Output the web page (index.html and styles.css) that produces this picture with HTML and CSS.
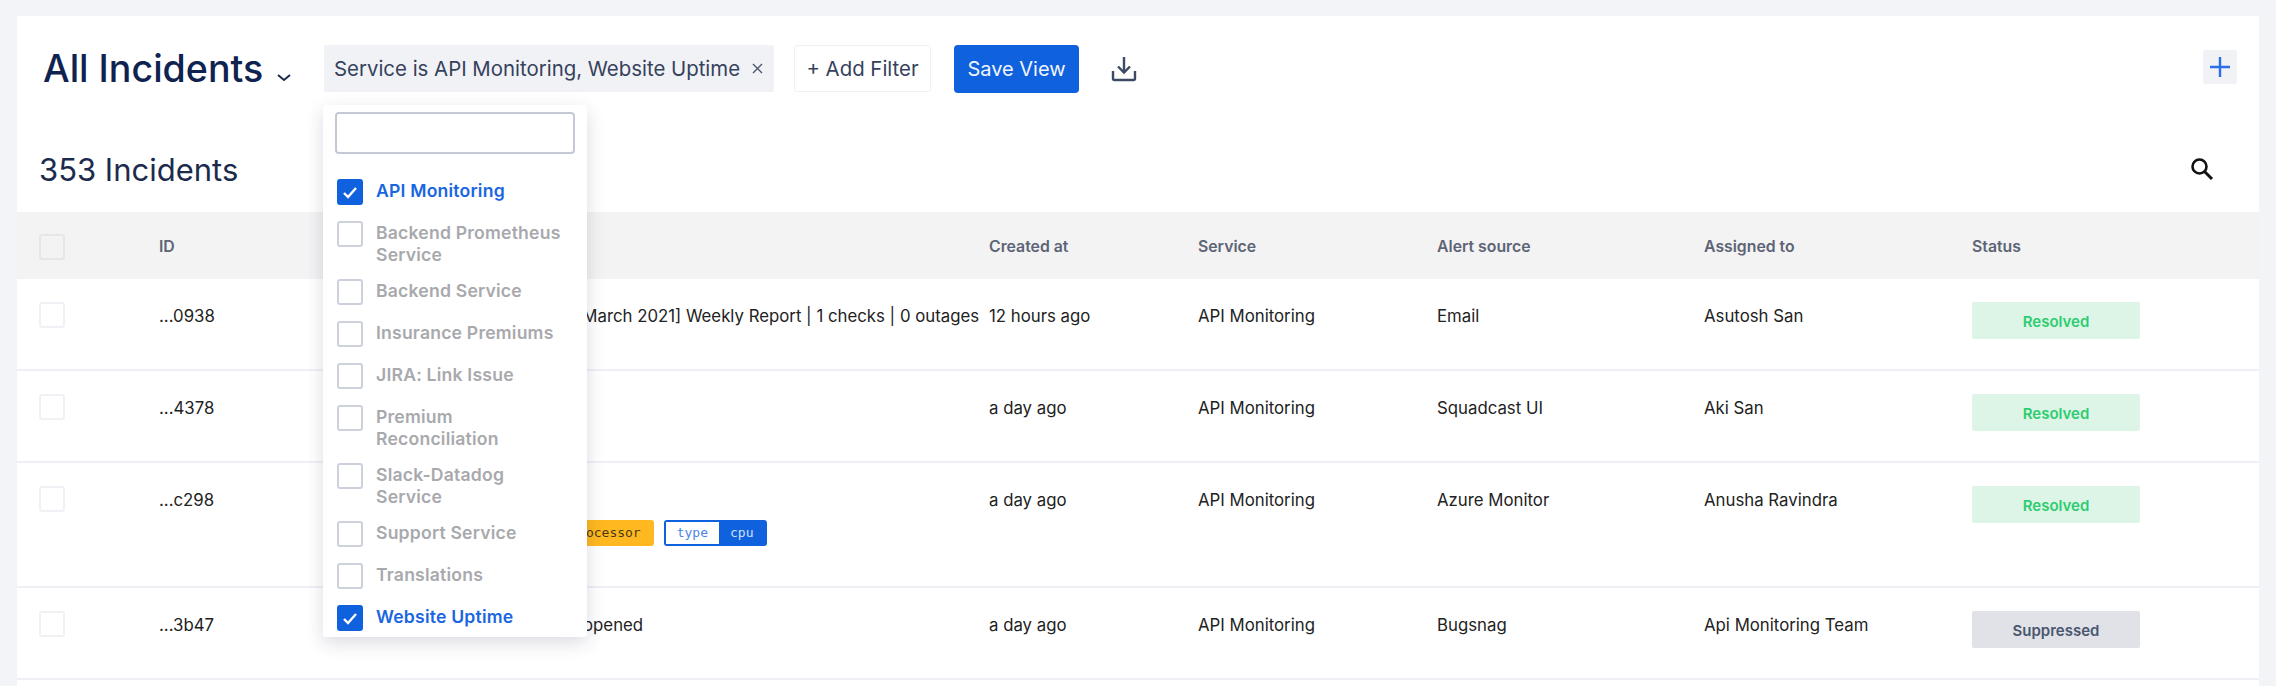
FILE: index.html
```html
<!DOCTYPE html>
<html>
<head>
<meta charset="utf-8"/>
<title>All Incidents</title>
<link rel="stylesheet" href="styles.css">
</head>
<body>
<div class="card">

<div class="toolbar">
  <h1 class="title">All Incidents</h1>
  <svg class="chevron" width="16" height="9" viewBox="0 0 16 9"><path d="M2 2l6 5 6-5" fill="none" stroke="#1c2b4d" stroke-width="2"/></svg>
  <div class="chip">Service is API Monitoring, Website Uptime
    <svg width="13" height="13" viewBox="0 0 13 13"><path d="M2 2l9 9M11 2l-9 9" fill="none" stroke="#4a5570" stroke-width="1.4"/></svg>
  </div>
  <button class="add-filter">+ Add Filter</button>
  <button class="save-view">Save View</button>
  <svg class="download" width="26" height="26" viewBox="0 0 26 26"><path d="M13 1v15M7 10.500l6 6 6-6" fill="none" stroke="#3d4a63" stroke-width="2.400"/><path d="M2 15v7.500a1.500 1.500 0 0 0 1.500 1.500h19a1.500 1.500 0 0 0 1.500-1.500V15" fill="none" stroke="#3d4a63" stroke-width="2.400"/></svg>
  <div class="plus-box"><svg width="22" height="22" viewBox="0 0 22 22"><path d="M11 1v20M1 11h20" fill="none" stroke="#2a6fe8" stroke-width="2.400"/></svg></div>
</div>

<div class="count-row">
  <h2 class="count">353 Incidents</h2>
  <svg class="search" width="24" height="24" viewBox="0 0 24 24"><circle cx="9.500" cy="9.500" r="7" fill="none" stroke="#111" stroke-width="2.600"/><path d="M14.500 14.500l7.500 7.500" fill="none" stroke="#111" stroke-width="3"/></svg>
</div>

<div class="grid-row head-row">
  <span class="box"></span>
  <span>ID</span>
  <span></span>
  <span>Created at</span>
  <span>Service</span>
  <span>Alert source</span>
  <span>Assigned to</span>
  <span>Status</span>
</div>

<div class="grid-row">
  <span class="box"></span>
  <span class="cell">...0938</span>
  <span class="cell nowrap">[Pingdom] [1 March 2021 – 8 March 2021] Weekly Report | 1 checks | 0 outages</span>
  <span class="cell">12 hours ago</span>
  <span class="cell">API Monitoring</span>
  <span class="cell">Email</span>
  <span class="cell">Asutosh San</span>
  <span class="status resolved">Resolved</span>
</div>

<div class="grid-row">
  <span class="box"></span>
  <span class="cell">...4378</span>
  <span class="cell nowrap">Response time high</span>
  <span class="cell">a day ago</span>
  <span class="cell">API Monitoring</span>
  <span class="cell">Squadcast UI</span>
  <span class="cell">Aki San</span>
  <span class="status resolved">Resolved</span>
</div>

<div class="grid-row">
  <span class="box"></span>
  <span class="cell">...c298</span>
  <div>
    <div class="cell nowrap">CPU usage is high</div>
    <div class="tags">
      <span class="tag tag-other"><span class="tag-key">host</span><span class="tag-val">db-prod</span></span>
      <span class="tag tag-yellow"><span class="tag-key">group</span><span class="tag-val">processor</span></span>
      <span class="tag tag-blue"><span class="tag-key">type</span><span class="tag-val">cpu</span></span>
    </div>
  </div>
  <span class="cell">a day ago</span>
  <span class="cell">API Monitoring</span>
  <span class="cell">Azure Monitor</span>
  <span class="cell">Anusha Ravindra</span>
  <span class="status resolved">Resolved</span>
</div>

<div class="grid-row">
  <span class="box"></span>
  <span class="cell">...3b47</span>
  <span class="cell nowrap">Website Uptime event was reopened</span>
  <span class="cell">a day ago</span>
  <span class="cell">API Monitoring</span>
  <span class="cell">Bugsnag</span>
  <span class="cell">Api Monitoring Team</span>
  <span class="status suppressed">Suppressed</span>
</div>

<div class="dropdown">
  <input class="dd-search" type="text"/>
  <div class="dd-item on"><span class="dd-box"><svg width="16" height="13" viewBox="0 0 16 13"><path d="M2 7l4 4 8-9" fill="none" stroke="#fff" stroke-width="2.400"/></svg></span><span class="dd-label">API Monitoring</span></div>
  <div class="dd-item"><span class="dd-box"></span><span class="dd-label">Backend Prometheus Service</span></div>
  <div class="dd-item"><span class="dd-box"></span><span class="dd-label">Backend Service</span></div>
  <div class="dd-item"><span class="dd-box"></span><span class="dd-label">Insurance Premiums</span></div>
  <div class="dd-item"><span class="dd-box"></span><span class="dd-label">JIRA: Link Issue</span></div>
  <div class="dd-item"><span class="dd-box"></span><span class="dd-label">Premium Reconciliation</span></div>
  <div class="dd-item"><span class="dd-box"></span><span class="dd-label">Slack-Datadog Service</span></div>
  <div class="dd-item"><span class="dd-box"></span><span class="dd-label">Support Service</span></div>
  <div class="dd-item"><span class="dd-box"></span><span class="dd-label">Translations</span></div>
  <div class="dd-item on"><span class="dd-box"><svg width="16" height="13" viewBox="0 0 16 13"><path d="M2 7l4 4 8-9" fill="none" stroke="#fff" stroke-width="2.400"/></svg></span><span class="dd-label">Website Uptime</span></div>
</div>

</div>
</body>
</html>
```

FILE: styles.css
```css
html, body {
   height: 100%;
}

body {
   margin: 0;
   padding: 16px 17px 0;
   box-sizing: border-box;
   overflow: hidden;
   background-color: #f3f4f8;
   font-family: Inter, "Liberation Sans", sans-serif;
   color: #1c2b4d;
}

.card {
   position: relative;
   height: 100%;
   background-color: white;
}

/* top bar */

.toolbar {
   display: flex;
   align-items: flex-start;
   height: 76px;
   padding: 29px 22px 0 26px;
   box-sizing: border-box;
}

.title {
   margin: 0;
   width: 233px;
   font-size: 37.600px;
   line-height: 47px;
   font-weight: 500;
   color: #0f2350;
}

.chevron {
   margin: 28px 32px 0 0;
}

.chip {
   display: flex;
   align-items: center;
   gap: 11px;
   width: 450px;
   height: 47px;
   padding-left: 10px;
   box-sizing: border-box;
   background-color: #f1f2f6;
   border-radius: 2px;
   font-size: 20.400px;
   white-space: nowrap;
   color: #36415c;
}

.add-filter {
   width: 137px;
   height: 47px;
   margin-left: 20px;
   padding: 0;
   background-color: white;
   border: 1px solid #f0f1f4;
   border-radius: 3px;
   font-family: inherit;
   font-size: 20.400px;
   color: #36415c;
}

.save-view {
   width: 125px;
   height: 48px;
   margin-left: 23px;
   padding: 0;
   background-color: #0f61dd;
   border: none;
   border-radius: 4px;
   font-family: inherit;
   font-size: 20px;
   color: #f1f5ff;
}

.download {
   margin: 11px 0 0 32px;
}

.plus-box {
   display: flex;
   align-items: center;
   justify-content: center;
   width: 34px;
   height: 34px;
   margin: 5px 0 0 auto;
   background-color: #f1f2f6;
   border-radius: 2px;
}

/* count row */

.count-row {
   display: flex;
   align-items: center;
   justify-content: space-between;
   height: 120px;
   padding: 34px 45px 0 22px;
   box-sizing: border-box;
}

.count {
   margin: 0;
   font-size: 31px;
   font-weight: 400;
   color: #1c2b4d;
}

/* table */

.grid-row {
   display: grid;
   grid-template-columns: 120px 193px 637px 209px 239px 267px 268px 1fr;
   min-height: 92px;
   padding: 23px 0 29px 22px;
   box-sizing: border-box;
   border-bottom: 2px solid #eef0f6;
   font-size: 16.800px;
   color: #222;
}

.head-row {
   align-items: center;
   min-height: 67px;
   padding: 2px 0 0 22px;
   border-bottom: none;
   background-color: #f3f3f4;
   font-size: 15.800px;
   font-weight: 600;
   color: #5d6475;
}

.box {
   display: block;
   width: 26px;
   height: 26px;
   box-sizing: border-box;
   background-color: white;
   border: 2px solid #f0f1f4;
   border-radius: 3px;
}

.head-row .box {
   background-color: #f3f3f4;
   border-color: #e6e6e8;
}

.cell {
   line-height: 29px;
}

.nowrap {
   white-space: nowrap;
}

.status {
   width: 168px;
   height: 37px;
   line-height: 39px;
   text-align: center;
   border-radius: 2px;
   font-size: 15px;
   font-weight: 600;
}

.resolved {
   background-color: #dcf5e7;
   color: #2ecc71;
}

.suppressed {
   background-color: #e0e2e8;
   color: #4a5570;
}

.tags {
   display: flex;
   gap: 10px;
   margin: 5px 0 11px;
   font-family: "DejaVu Sans Mono", monospace;
   font-size: 13px;
   line-height: 22px;
}

.tag {
   display: flex;
   height: 26px;
   box-sizing: border-box;
   border: 2px solid;
   border-radius: 3px;
}

.tag-key {
   padding: 0 11px;
   background-color: white;
}

.tag-val {
   padding: 0 11px;
}

.tag-blue {
   border-color: #0f61dd;
}

.tag-blue .tag-key {
   color: #4a86e8;
}

.tag-blue .tag-val {
   background-color: #0f61dd;
   color: #cfe0fb;
}

.tag-yellow {
   border-color: #ffb820;
}

.tag-yellow .tag-key {
   color: #d99a10;
}

.tag-yellow .tag-val {
   background-color: #ffb820;
   color: #4a3a10;
}

.tag-other {
   border-color: #2ecc71;
}

.tag-other .tag-key {
   color: #2ecc71;
}

.tag-other .tag-val {
   background-color: #2ecc71;
   color: white;
}

/* service filter menu, lies over the table */

.dropdown {
   position: absolute;
   left: 306px;
   top: 89px;
   width: 264px;
   height: 532px;
   padding: 7px 12px;
   box-sizing: border-box;
   background-color: white;
   border-radius: 3px;
   box-shadow: 0 6px 18px rgba(30, 40, 70, 0.16);
}

.dd-search {
   display: block;
   width: 240px;
   height: 42px;
   margin-bottom: 25px;
   box-sizing: border-box;
   border: 2px solid #c5c9d6;
   border-radius: 4px;
   background-color: white;
}

.dd-item {
   display: flex;
   gap: 13px;
   margin: 0 0 16px 2px;
   font-size: 17.600px;
   line-height: 22px;
   font-weight: 600;
   letter-spacing: 0.2px;
   color: #a8a9ad;
}

.dd-item.on {
   color: #1a66e0;
}

.dd-box {
   display: flex;
   flex: none;
   align-items: center;
   justify-content: center;
   width: 26px;
   height: 26px;
   box-sizing: border-box;
   border: 2px solid #cdd1dc;
   border-radius: 3px;
}

.on .dd-box {
   background-color: #0f61dd;
   border-color: #0f61dd;
}

.dd-label {
   width: 195px;
   padding-top: 1px;
   margin-bottom: -3px;
}
```
